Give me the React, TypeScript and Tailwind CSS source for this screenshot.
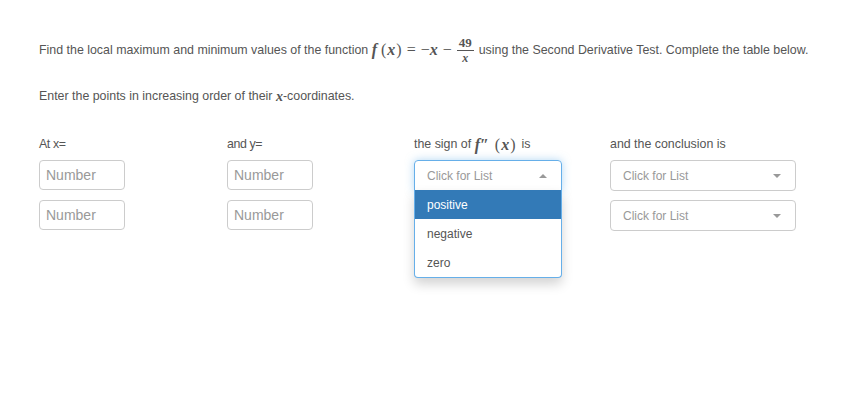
import React from 'react'

const math = { fontFamily: '"Liberation Serif", "DejaVu Serif", serif' }

function Caret({ up }: { up?: boolean }) {
  return (
    <span
      className={
        up
          ? 'w-0 h-0 border-x-[4px] border-x-transparent border-b-[4px] border-b-[#999]'
          : 'w-0 h-0 border-x-[4px] border-x-transparent border-t-[4px] border-t-[#999]'
      }
    />
  )
}

function NumberBox() {
  return (
    <div className="w-[86px] h-[30px] border border-[#ccc] rounded-[4px] flex items-center pl-[6px] text-[14px] text-[#999]">
      Number
    </div>
  )
}

function Select({ width }: { width: string }) {
  return (
    <div
      className={`${width} h-[31px] border border-[#ccc] rounded-[4px] flex items-center justify-between pl-[12px] pr-[14px] text-[12px] text-[#999]`}
    >
      <span>Click for List</span>
      <Caret />
    </div>
  )
}

function OpenSelect() {
  return (
    <div className="relative w-[148px]">
      <div className="h-[31px] border border-[#66afe9] rounded-t-[4px] flex items-center justify-between pl-[12px] pr-[14px] text-[12px] text-[#999] shadow-[0_0_8px_rgba(102,175,233,0.5)]">
        <span>Click for List</span>
        <Caret up />
      </div>
      <div className="absolute left-0 top-[30px] w-[148px] bg-white border border-[#66afe9] border-t-0 rounded-b-[4px] shadow-[0_6px_12px_rgba(0,0,0,0.175)] text-[12px] z-10">
        <div className="h-[29px] flex items-center pl-[12px] bg-[#337ab7] text-white">positive</div>
        <div className="h-[29px] flex items-center pl-[12px] text-[#555]">negative</div>
        <div className="h-[29px] flex items-center pl-[12px] text-[#555]">zero</div>
      </div>
    </div>
  )
}

function Fx() {
  return (
    <>
      <i className="text-[16px] font-bold" style={math}>f</i>
      <span className="text-[16px] ml-[4px]" style={math}>(<i className="font-bold px-[1px]">x</i>)</span>
    </>
  )
}

export default function App() {
  return (
    <div
      className="w-[867px] h-[410px] bg-white pl-[39px] pt-[36px] text-[#555] text-[12.4px]"
      style={{ fontFamily: '"Liberation Sans", Arial, sans-serif' }}
    >
      <p className="flex items-center h-[28px] whitespace-nowrap">
        <span>Find the local maximum and minimum values of the function&nbsp;</span>
        <Fx />
        <span className="text-[16px] mx-[5px]" style={math}>=</span>
        <span className="text-[16px]" style={math}>&minus;<i className="font-bold">x</i></span>
        <span className="text-[16px] mx-[5px]" style={math}>&minus;</span>
        <span className="inline-flex flex-col items-center leading-none text-[13px] font-bold" style={math}>
          <span className="pb-[1px]">49</span>
          <span className="w-[17px] border-t border-[#555]" />
          <i className="pt-[1px] text-[12px]">x</i>
        </span>
        <span className="ml-[5px]">using the Second Derivative Test. Complete the table below.</span>
      </p>

      <p className="mt-[23px] flex items-center h-[18px]">
        <span>Enter the points in increasing order of their&nbsp;</span>
        <i className="text-[14px] font-bold" style={math}>x</i>
        <span>-coordinates.</span>
      </p>

      <div className="mt-[27px] grid grid-cols-[188px_187px_196px_186px] items-start">
        <div className="h-[25px] flex items-center tracking-[-0.4px]">At x=</div>
        <div className="h-[25px] flex items-center tracking-[-0.4px]">and y=</div>
        <div className="h-[25px] flex items-center whitespace-nowrap">
          <span>the sign of&nbsp;</span>
          <i className="text-[16px] font-bold" style={math}>f&#8243;</i>
          <span className="text-[16px] ml-[6px] mr-[6px]" style={math}>(<i className="font-bold px-[1px]">x</i>)</span>
          <span>is</span>
        </div>
        <div className="h-[25px] flex items-center">and the conclusion is</div>
      </div>

      <div className="grid grid-cols-[188px_187px_196px_186px] gap-y-[9px] mt-[3px]">
        <NumberBox />
        <NumberBox />
        <OpenSelect />
        <Select width="w-[186px]" />
        <NumberBox />
        <NumberBox />
        <div />
        <Select width="w-[186px]" />
      </div>
    </div>
  )
}
